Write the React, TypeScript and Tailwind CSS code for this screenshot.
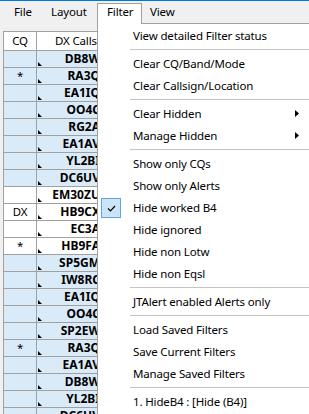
import React from "react";

const rows: [string, string][] = [
  ["", "DB8W"],
  ["*", "RA3Q"],
  ["", "EA1IQ"],
  ["", "OO4C"],
  ["", "RG2A"],
  ["", "EA1AV"],
  ["", "YL2BI"],
  ["", "DC6UV"],
  ["", "EM30ZU"],
  ["DX", "HB9CX"],
  ["", "EC3A"],
  ["*", "HB9FA"],
  ["", "SP5GM"],
  ["", "IW8RC"],
  ["", "EA1IQ"],
  ["", "OO4C"],
  ["", "SP2EW"],
  ["*", "RA3Q"],
  ["", "EA1AV"],
  ["", "DB8W"],
  ["", "YL2BI"],
  ["", "DC6UV"],
];

const whiteRows = new Set([8, 9, 10, 11]);

type Item =
  | { kind: "item"; label: string; arrow?: boolean; checked?: boolean }
  | { kind: "sep" };

const menu: Item[] = [
  { kind: "item", label: "View detailed Filter status" },
  { kind: "sep" },
  { kind: "item", label: "Clear CQ/Band/Mode" },
  { kind: "item", label: "Clear Callsign/Location" },
  { kind: "sep" },
  { kind: "item", label: "Clear Hidden", arrow: true },
  { kind: "item", label: "Manage Hidden", arrow: true },
  { kind: "sep" },
  { kind: "item", label: "Show only CQs" },
  { kind: "item", label: "Show only Alerts" },
  { kind: "item", label: "Hide worked B4", checked: true },
  { kind: "item", label: "Hide ignored" },
  { kind: "item", label: "Hide non Lotw" },
  { kind: "item", label: "Hide non Eqsl" },
  { kind: "sep" },
  { kind: "item", label: "JTAlert enabled Alerts only" },
  { kind: "sep" },
  { kind: "item", label: "Load Saved Filters" },
  { kind: "item", label: "Save Current Filters" },
  { kind: "item", label: "Manage Saved Filters" },
  { kind: "sep" },
  { kind: "item", label: "1. HideB4 : [Hide (B4)]" },
];

function Corner() {
  return (
    <svg className="absolute left-[1px] bottom-[1px]" width="4" height="4" viewBox="0 0 4 4">
      <polygon points="0,0 0,4 4,4" fill="#000" />
    </svg>
  );
}

export default function App() {
  return (
    <div className="relative w-[309px] h-[414px] overflow-hidden bg-[#f0f0f0] text-black font-['Noto_Sans',sans-serif] text-[11.5px] tracking-[-0.15px]">
      <div className="h-px bg-[#0078d7]" />
      {/* menubar */}
      <div className="flex h-[22px] items-center leading-[16px]">
        <div className="w-[51px] pl-[14px]">File</div>
        <div className="w-[46px]">Layout</div>
        <div className="relative z-20 self-start mt-[2px] w-[45px] h-[21px] border border-b-0 border-[#a0a0a0] bg-white pl-[9px]">
          Filter
        </div>
        <div className="pl-[8px]">View</div>
      </div>

      {/* table */}
      <div className="mt-[8px] ml-[3px] w-[110px] border-l border-t border-[#a0a0a0] bg-white leading-[16px]">
        <div className="flex h-[19px] border-b border-[#a0a0a0]">
          <div className="w-[33px] border-r border-[#a0a0a0] flex items-center justify-center">CQ</div>
          <div className="flex-1 flex items-center pl-[18px] whitespace-nowrap overflow-hidden">DX Callsign</div>
        </div>
        {rows.map(([cq, call], i) => (
          <div
            key={i}
            className={`flex h-[17px] border-b border-[#a0a0a0] ${whiteRows.has(i) ? "bg-white" : "bg-[#d9eaf9]"}`}
          >
            <div className="w-[33px] border-r border-[#a0a0a0] flex items-center justify-center">{cq}</div>
            <div className="relative w-[66px] flex items-center justify-end pr-[3px] font-bold text-[12px] tracking-normal whitespace-nowrap">
              <Corner />
              {call}
            </div>
          </div>
        ))}
      </div>

      {/* dropdown menu */}
      <div className="absolute left-[97px] top-[23px] z-10 w-[240px] h-[400px] border border-[#a0a0a0] bg-white pt-px leading-[16px]">
        {menu.map((m, i) =>
          m.kind === "sep" ? (
            <div key={i} className="h-[6px] pt-[2px] pl-[32px]">
              <div className="h-px bg-[#c4c4c4]" />
            </div>
          ) : (
            <div key={i} className="relative h-[22px] flex items-center pl-[35px] whitespace-nowrap">
              {m.checked && (
                <div className="absolute left-[3px] top-[1px] w-[20px] h-[20px] border border-[#5ea6e8] bg-[#cce4f7] flex items-center justify-center">
                  <svg width="9" height="7" viewBox="0 0 9 7">
                    <polyline points="1,3.5 3.5,6 8,1" fill="none" stroke="#000" strokeWidth="1.2" />
                  </svg>
                </div>
              )}
              {m.label}
              {m.arrow && (
                <svg className="absolute left-[197px] top-[7px]" width="4" height="7" viewBox="0 0 4 7">
                  <polygon points="0,0 4,3.5 0,7" fill="#000" />
                </svg>
              )}
            </div>
          )
        )}
      </div>
    </div>
  );
}
